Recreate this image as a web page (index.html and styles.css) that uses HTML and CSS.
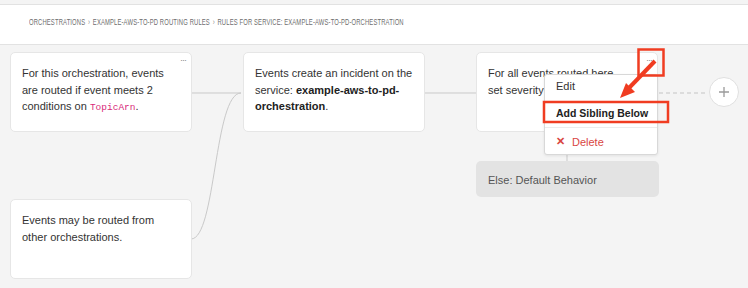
FILE: index.html
```html
<!DOCTYPE html>
<html lang="en">
<head>
  <meta charset="UTF-8">
  <meta name="viewport" content="width=device-width, initial-scale=1">
  <title>Rules for service: example-aws-to-pd-orchestration</title>
  <link rel="stylesheet" href="styles.css">
</head>
<body>

<header class="topbar">
  <nav class="crumbs">
    <span>Orchestrations</span>
    <span class="sep">›</span>
    <span>example-aws-to-pd Routing Rules</span>
    <span class="sep">›</span>
    <span>Rules for service: example-aws-to-pd-orchestration</span>
  </nav>
</header>

<main class="canvas">
  <svg class="edges" width="748" height="243" viewBox="0 0 748 243">
    <path d="M191 48 H241" />
    <path d="M191 194 C216 194, 214 48, 241 48" />
    <path d="M425 48 H476" />
    <path d="M567 87 V116" />
    <path class="dashed" d="M659 48 H708" />
  </svg>

  <div class="flow">
    <div class="col col-left">
      <div class="card">
        <span class="dots">···</span>
        <p>For this orchestration, events are routed if event meets 2 conditions on <code>TopicArn</code>.</p>
      </div>
      <div class="card">
        <p>Events may be routed from other orchestrations.</p>
      </div>
    </div>

    <div class="col">
      <div class="card">
        <p>Events create an incident on the service: <strong>example-aws-to-pd-orchestration</strong>.</p>
      </div>
    </div>

    <div class="col col-rules">
      <div class="card">
        <span class="dots">···</span>
        <p>For all events routed here,<br>set severity to critical.</p>
      </div>
      <div class="else-box">Else: Default Behavior</div>
    </div>

    <div class="col">
      <button class="add-btn" aria-label="Add rule">
        <svg width="12" height="12" viewBox="0 0 12 12"><path d="M6 1 V11 M1 6 H11" /></svg>
      </button>
    </div>
  </div>

  <ul class="menu">
    <li>Edit</li>
    <li class="strong">Add Sibling Below</li>
    <li class="divider"></li>
    <li class="danger"><span class="x">✕</span>Delete</li>
  </ul>

  <svg class="marks" width="748" height="243" viewBox="0 0 748 243">
    <rect x="638.5" y="4.5" width="25" height="26" />
    <rect x="544" y="57" width="124" height="20" />
    <path class="shaft" d="M655 16 L628 44" />
    <polygon points="620,53 635,47 626,38" />
  </svg>
</main>

</body>
</html>
```

FILE: styles.css
```css
body {
  margin: 0;
  background-color: #f4f4f4;
  font-family: 'Liberation Sans', Arial, sans-serif;
  color: #333;
}

.topbar {
  margin-top: 4px;
  height: 27px;
  padding: 12px 0 0 29px;
  background-color: #fff;
  border-top: 1px solid #e2e2e2;
  border-bottom: 1px solid #e2e2e2;
}

/* the app uses a condensed face; squeeze the sans to the same run length */
.crumbs {
  display: flex;
  gap: 4px;
  font-size: 8.5px;
  line-height: 10px;
  letter-spacing: 0.2px;
  text-transform: uppercase;
  color: #6e6e6e;
  transform: scaleX(0.69);
  transform-origin: left center;
  white-space: nowrap;
}

.crumbs .sep {
  color: #888;
}

.canvas {
  position: relative;
  height: 243px;
  overflow: hidden;
}

.edges {
  position: absolute;
  top: 0;
  left: 0;
  fill: none;
  stroke: #c9c9c9;
  stroke-width: 1;
}

.edges .dashed {
  stroke: #c4c4c4;
  stroke-dasharray: 4 3;
}

.flow {
  position: relative;
  z-index: 1;
  display: grid;
  grid-template-columns: 182px 182px 183px 30px;
  column-gap: 51px;
  padding: 7px 0 0 10px;
}

.col {
  display: flex;
  flex-direction: column;
  align-items: flex-start;
}

.col-left {
  gap: 67px;
}

.col-rules {
  gap: 29px;
}

.card {
  position: relative;
  box-sizing: border-box;
  width: 182px;
  height: 80px;
  padding: 12px 11px;
  background-color: #fff;
  border: 1px solid #e6e6e6;
  border-radius: 5px;
}

.card p {
  margin: 0;
  font-size: 11px;
  line-height: 16.5px;
  color: #333;
}

.card strong {
  color: #222;
}

.card code {
  font-family: 'Liberation Mono', monospace;
  font-size: 9.5px;
  line-height: 1;
  color: #d92a7a;
}

.dots {
  position: absolute;
  top: 2px;
  right: 5px;
  font-size: 9px;
  color: #888;
  letter-spacing: -1px;
}

.else-box {
  box-sizing: border-box;
  width: 183px;
  height: 36px;
  padding: 13px 12px 0;
  background-color: #e3e3e3;
  border-radius: 5px;
  font-size: 11px;
  color: #555;
}

.add-btn {
  box-sizing: border-box;
  width: 30px;
  height: 30px;
  margin-top: 25px;
  margin-left: -1px;
  padding: 0;
  border: 1px solid #e0e0e0;
  border-radius: 50%;
  background-color: #fff;
  display: flex;
  align-items: center;
  justify-content: center;
}

.add-btn path {
  stroke: #9a9a9a;
  stroke-width: 1.3;
}

.menu {
  position: absolute;
  z-index: 2;
  top: 29px;
  left: 544px;
  box-sizing: border-box;
  width: 114px;
  margin: 0;
  padding: 0;
  list-style: none;
  background-color: #fff;
  border: 1px solid #d8d8d8;
  border-radius: 3px;
  box-shadow: 0 1px 3px rgba(0,0,0,0.08);
}

.menu li {
  height: 26px;
  padding-left: 11px;
  display: flex;
  align-items: center;
  font-size: 11px;
  color: #333;
}

.menu li:first-child {
  height: 22px;
  margin-bottom: 3px;
}

.menu .strong {
  font-weight: bold;
  font-size: 10.5px;
  color: #222;
}

.menu .divider {
  height: 1px;
  padding: 0;
  margin: 1px 0;
  background-color: #ececec;
}

.menu .danger {
  height: 25px;
  color: #d9463f;
}

.menu .x {
  font-weight: bold;
  font-size: 11px;
  margin-right: 7px;
}

.marks {
  position: absolute;
  z-index: 3;
  top: 0;
  left: 0;
  pointer-events: none;
}

.marks rect {
  fill: none;
  stroke: #f03c21;
  stroke-width: 2.5;
}

.marks .shaft {
  fill: none;
  stroke: #f03c21;
  stroke-width: 4;
}

.marks polygon {
  fill: #f03c21;
}
```
